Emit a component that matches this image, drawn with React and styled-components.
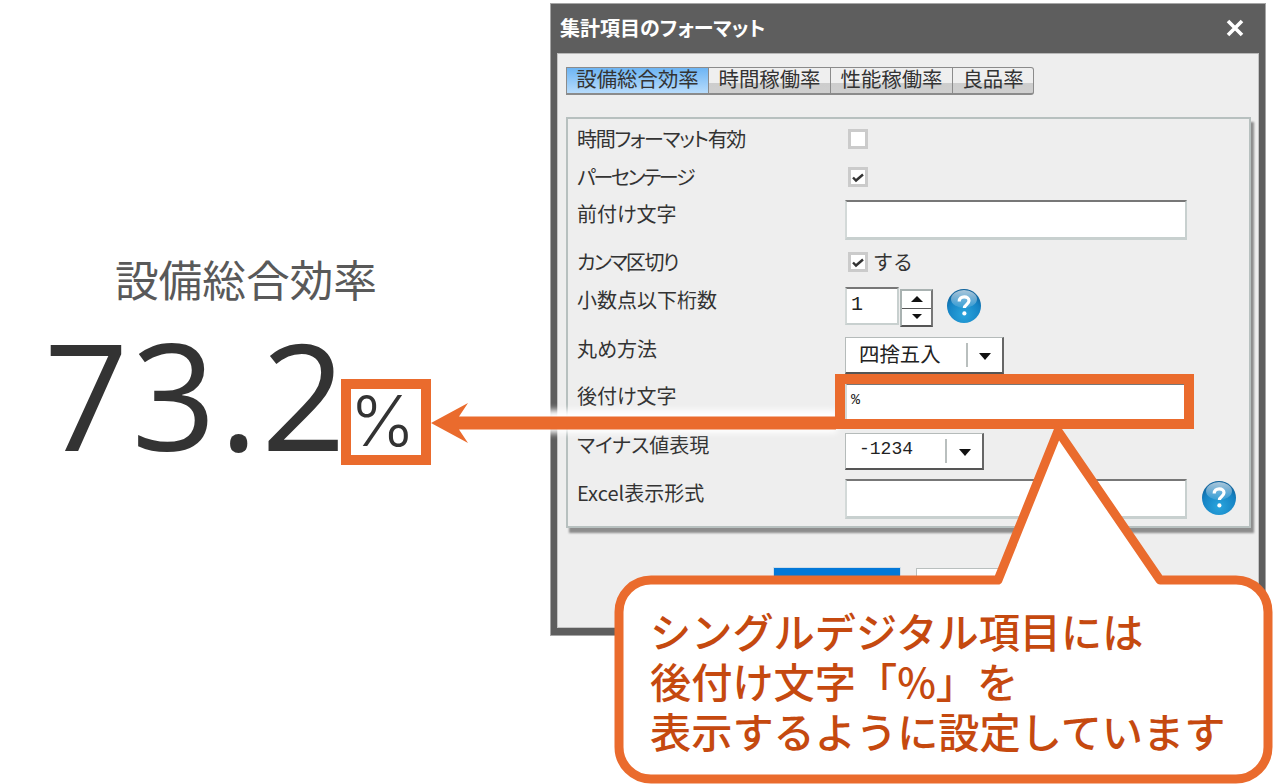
import React from "react";
import styled, { createGlobalStyle } from "styled-components";

const GlobalStyle = createGlobalStyle`
  html, body {
    margin: 0;
    padding: 0;
    background: #fff;
  }
`;

const JP = `"Noto Sans CJK JP", "Noto Sans", sans-serif`;

const HelpIcon = ({ id }) => (
  <svg width="36" height="36" viewBox="0 0 36 36">
    <defs>
      <radialGradient id={id} cx="50%" cy="75%" r="70%">
        <stop offset="0%" stopColor="#2aa5dd" />
        <stop offset="70%" stopColor="#1583c4" />
        <stop offset="100%" stopColor="#0f639c" />
      </radialGradient>
      <linearGradient id={`${id}-top`} x1="0" y1="0" x2="0" y2="1">
        <stop offset="0%" stopColor="#fff" stopOpacity="0.65" />
        <stop offset="100%" stopColor="#fff" stopOpacity="0.1" />
      </linearGradient>
    </defs>
    <circle cx="18" cy="18" r="17" fill={`url(#${id})`} />
    <ellipse cx="18" cy="11" rx="13" ry="9" fill={`url(#${id}-top)`} />
    <path
      d="M13.2 13.4c0-3 2.2-4.6 5-4.6s4.8 1.6 4.8 4c0 3.6-4.6 3.6-4.6 7.2"
      fill="none"
      stroke="#fff"
      strokeWidth="3.2"
    />
    <circle cx="18.4" cy="25.4" r="2.1" fill="#fff" />
  </svg>
);

const Check = () => (
  <svg width="14" height="14" viewBox="0 0 14 14">
    <path d="M2 7.5l3 3 7-6" fill="none" stroke="#333" strokeWidth="2.4" />
  </svg>
);

const App = () => {
  const rows = {
    timeFormat: "時間フォーマット有効",
    percent: "パーセンテージ",
    prefix: "前付け文字",
    comma: "カンマ区切り",
    decimals: "小数点以下桁数",
    rounding: "丸め方法",
    suffix: "後付け文字",
    minus: "マイナス値表現",
    excel: "Excel表示形式",
  };

  return (
    <Page>
      <GlobalStyle />
      <Summary>
        <SummaryTitle>設備総合効率</SummaryTitle>
        <SummaryValue>
          73.2<Unit>%</Unit>
        </SummaryValue>
      </Summary>

      <Dialog>
        <TitleBar>
          <DialogTitle>集計項目のフォーマット</DialogTitle>
          <CloseMark viewBox="0 0 18 18">
            <path d="M2 2l14 14M16 2L2 16" stroke="#fff" strokeWidth="3.6" fill="none" />
          </CloseMark>
        </TitleBar>
        <DialogBody>
          <Tabs>
            <Tab $active $width={143}>設備総合効率</Tab>
            <Tab $width={122}>時間稼働率</Tab>
            <Tab $width={122}>性能稼働率</Tab>
            <Tab $width={81} $last>良品率</Tab>
          </Tabs>

          <Panel>
            <Row $height={38}>
              <Label $spacing={-1.3}>{rows.timeFormat}</Label>
              <CheckBox $top={9} />
            </Row>
            <Row $height={37}>
              <Label $spacing={-2.3}>{rows.percent}</Label>
              <CheckBox $top={9}><Check /></CheckBox>
            </Row>
            <Row $height={48}>
              <Label>{rows.prefix}</Label>
              <TextField $top={5} />
            </Row>
            <Row $height={38}>
              <Label $spacing={-1.7}>{rows.comma}</Label>
              <CheckBox $top={9}><Check /></CheckBox>
              <CheckText>する</CheckText>
            </Row>
            <Row $height={49}>
              <Label>{rows.decimals}</Label>
              <SpinField>1</SpinField>
              <SpinButtons>
                <SpinUp />
                <SpinDown />
              </SpinButtons>
              <HelpSlot $left={13}><HelpIcon id="help-a" /></HelpSlot>
            </Row>
            <Row $height={47}>
              <Label>{rows.rounding}</Label>
              <SelectBox $width={159}>
                <SelectText $width={122}>四捨五入</SelectText>
                <SelectArrow />
              </SelectBox>
            </Row>
            <Row $height={49}>
              <Label>{rows.suffix}</Label>
              <TextField $top={6}>
                <FieldValue>%</FieldValue>
              </TextField>
            </Row>
            <Row $height={48}>
              <Label>{rows.minus}</Label>
              <SelectBox $width={139}>
                <SelectText $width={101} $mono>-1234</SelectText>
                <SelectArrow />
              </SelectBox>
            </Row>
            <Row $height={50}>
              <Label>{rows.excel}</Label>
              <TextField $top={5} />
              <HelpSlot $left={14} $top={6}><HelpIcon id="help-b" /></HelpSlot>
            </Row>
          </Panel>

          <Buttons>
            <PrimaryButton />
            <SecondaryButton />
          </Buttons>
        </DialogBody>
      </Dialog>

      {/* annotations drawn over the screenshot */}
      <ArrowGlow />
      <ArrowMark viewBox="0 0 405 40">
        <path d="M0 20L37 0l-9 13.500H405v13H28l9 13.500z" fill="#ea6b2d" />
      </ArrowMark>
      <HighlightUnit />
      <HighlightField />
      <Callout>
        <CalloutShape viewBox="0 0 659 359">
          <path
            d="M37 155H384L444 6 546 155H622a32 32 0 0 1 32 32V322a32 32 0 0 1-32 32H37a32 32 0 0 1-32-32V187a32 32 0 0 1 32-32z"
            fill="#fff"
            stroke="#ea6b2d"
            strokeWidth="9"
            strokeLinejoin="round"
          />
        </CalloutShape>
        <CalloutText>
          シングルデジタル項目には
          <br />
          後付け文字「%」を
          <br />
          表示するように設定しています
        </CalloutText>
      </Callout>
    </Page>
  );
};

export default App;

const Page = styled.div`
  position: relative;
  display: flex;
  align-items: flex-start;
  width: 1273px;
  height: 784px;
  overflow: hidden;
  background: #fff;
  font-family: ${JP};
`;

const Summary = styled.div`
  display: flex;
  flex-direction: column;
  width: 550px;
  flex: none;
  padding-top: 247px;
  box-sizing: border-box;
`;

const SummaryTitle = styled.div`
  width: 492px;
  font-size: 43.7px;
  line-height: 62px;
  text-align: center;
  color: #595959;
`;

const SummaryValue = styled.div`
  display: flex;
  align-items: baseline;
  margin: 20px 0 0 44px;
  font-family: "Open Sans", sans-serif;
  font-size: 148px;
  letter-spacing: 3px;
  line-height: 130px;
  color: #333;
`;

const Unit = styled.span`
  margin-left: 1px;
  font-family: Inter, "Open Sans", sans-serif;
  font-size: 70px;
  font-weight: 300;
  letter-spacing: 0;
  color: #333;
  position: relative;
  top: -5px;
`;

const Dialog = styled.div`
  width: 716px;
  height: 633px;
  margin-top: 3px;
  flex: none;
  display: flex;
  flex-direction: column;
  box-sizing: border-box;
  background: #5e5e5e;
  border: 1px solid #a6a6a6;
`;

const TitleBar = styled.div`
  height: 49px;
  flex: none;
  display: flex;
  align-items: center;
  justify-content: space-between;
  padding: 0 21px 2px 9px;
  box-sizing: border-box;
`;

const DialogTitle = styled.div`
  font-size: 20px;
  font-weight: 700;
  color: #fff;
  font-feature-settings: "palt";
`;

const CloseMark = styled.svg`
  width: 18px;
  height: 18px;
`;

const DialogBody = styled.div`
  flex: 1;
  margin: 0 6px 7px 6px;
  padding: 13px 8px 0 8px;
  background: #eeeeee;
  border-top: 1px solid #b8b8b8;
  border-left: 1px solid #c4c4c4;
  border-right: 1px solid #c4c4c4;
  border-bottom: 1px solid #c4c4c4;
  display: flex;
  flex-direction: column;
  min-height: 0;
`;

const Tabs = styled.div`
  display: flex;
  height: 28px;
  flex: none;
`;

const Tab = styled.div`
  width: ${(p) => p.$width}px;
  box-sizing: border-box;
  font-size: 20.4px;
  line-height: 21px;
  text-align: center;
  white-space: nowrap;
  color: #333;
  border: 1px solid #8b8b8b;
  border-left-width: ${(p) => (p.$active ? 1 : 0)}px;
  border-bottom-width: 2px;
  border-radius: ${(p) => (p.$last ? "0 3px 3px 0" : "0")};
  background: ${(p) =>
    p.$active
      ? "linear-gradient(#6db5f4, #b7dbfb)"
      : "linear-gradient(#efefef 0%, #efefef 60%, #cdcdcd 62%, #cfcfcf 100%)"};
`;

const Panel = styled.div`
  margin-top: 22px;
  width: 685px;
  height: 411px;
  flex: none;
  box-sizing: border-box;
  padding: 1px 0 0 9px;
  background: #eeeeee;
  border: 2px solid #b7c0bf;
  box-shadow: 3px 5px 2px #8d8d8d;
`;

const Row = styled.div`
  display: flex;
  align-items: flex-start;
  height: ${(p) => p.$height}px;
`;

const Label = styled.div`
  width: 268px;
  flex: none;
  font-size: 20px;
  line-height: 38px;
  letter-spacing: ${(p) => p.$spacing || 0}px;
  color: #333;
  white-space: nowrap;
  font-feature-settings: "palt";
`;

const CheckBox = styled.div`
  width: 20px;
  height: 20px;
  margin: ${(p) => p.$top}px 0 0 3px;
  box-sizing: border-box;
  border: 3px solid #cbcbcb;
  background: #fff;
  display: flex;
  align-items: center;
  justify-content: center;
`;

const CheckText = styled.span`
  margin-left: 5px;
  font-size: 20px;
  line-height: 38px;
  color: #333;
`;

const TextField = styled.div`
  width: 342px;
  height: 40px;
  margin-top: ${(p) => p.$top}px;
  box-sizing: border-box;
  background: #fff;
  border-top: 2px solid #777;
  border-left: 2px solid #d3d9d8;
  border-right: 2px solid #c8d0cf;
  border-bottom: 3px solid #c8d0cf;
  padding-left: 4px;
`;

const FieldValue = styled.span`
  font-family: "Liberation Mono", monospace;
  font-size: 15px;
  line-height: 30px;
  color: #222;
`;

const SpinField = styled.div`
  width: 54px;
  height: 38px;
  margin-top: 6px;
  box-sizing: border-box;
  padding-left: 4px;
  background: #fff;
  border-top: 2px solid #777;
  border-left: 2px solid #d3d9d8;
  border-right: 2px solid #c8d0cf;
  border-bottom: 2px solid #c8d0cf;
  font-family: "Liberation Mono", monospace;
  font-size: 20px;
  line-height: 32px;
  color: #222;
`;

const SpinButtons = styled.div`
  width: 33px;
  height: 38px;
  margin: 8px 0 0 1px;
  box-sizing: border-box;
  display: flex;
  flex-direction: column;
  background: #fff;
  border: 2px solid #a9b2b1;
  border-bottom-color: #555;
  border-right-color: #777;
`;

const SpinUp = styled.div`
  flex: 1;
  border-bottom: 1px solid #555;
  display: flex;
  align-items: center;
  justify-content: center;

  &::before {
    content: "";
    border-left: 6px solid transparent;
    border-right: 6px solid transparent;
    border-bottom: 6px solid #111;
  }
`;

const SpinDown = styled.div`
  flex: 1;
  display: flex;
  align-items: center;
  justify-content: center;

  &::before {
    content: "";
    border-left: 5px solid transparent;
    border-right: 5px solid transparent;
    border-top: 5px solid #111;
  }
`;

const HelpSlot = styled.div`
  width: 36px;
  height: 36px;
  margin: ${(p) => p.$top || 7}px 0 0 ${(p) => p.$left}px;
`;

const SelectBox = styled.div`
  width: ${(p) => p.$width}px;
  height: 37px;
  margin-top: 7px;
  box-sizing: border-box;
  display: flex;
  align-items: center;
  background: #fff;
  border: 1px solid #b5bbba;
  border-right: 2px solid #666;
  border-bottom: 2px solid #555;
`;

const SelectText = styled.div`
  width: ${(p) => p.$width}px;
  flex: none;
  box-sizing: border-box;
  height: 24px;
  padding-left: 13px;
  border-right: 2px solid #b9bfbe;
  font-family: ${(p) => (p.$mono ? `"Liberation Mono", monospace` : JP)};
  font-size: ${(p) => (p.$mono ? 18 : 20.4)}px;
  line-height: 20px;
  color: #222;
`;

const SelectArrow = styled.div`
  margin: 2px auto 0;
  border-left: 6px solid transparent;
  border-right: 6px solid transparent;
  border-top: 7px solid #111;
`;

const Buttons = styled.div`
  display: flex;
  gap: 16px;
  margin: 40px 0 0 208px;
`;

const PrimaryButton = styled.div`
  width: 126px;
  height: 40px;
  background: #0378d8;
  outline: 1px solid #cfdde8;
`;

const SecondaryButton = styled.div`
  width: 120px;
  height: 40px;
  box-sizing: border-box;
  background: #fff;
  border: 1px solid #b9bfbe;
`;

const ArrowGlow = styled.div`
  position: absolute;
  left: 545px;
  top: 410px;
  width: 292px;
  height: 23px;
  background: #fff;
  filter: blur(3px);
`;

const ArrowMark = styled.svg`
  position: absolute;
  left: 431px;
  top: 403px;
  width: 405px;
  height: 40px;
`;

const HighlightUnit = styled.div`
  position: absolute;
  left: 341px;
  top: 379px;
  width: 90px;
  height: 86px;
  box-sizing: border-box;
  border: 10px solid #ea6b2d;
`;

const HighlightField = styled.div`
  position: absolute;
  left: 835px;
  top: 374px;
  width: 359px;
  height: 55px;
  box-sizing: border-box;
  border: 10px solid #ea6b2d;
`;

const Callout = styled.div`
  position: absolute;
  left: 614px;
  top: 425px;
  width: 659px;
  height: 359px;
`;

const CalloutShape = styled.svg`
  position: absolute;
  left: 0;
  top: 0;
  width: 659px;
  height: 359px;
`;

const CalloutText = styled.div`
  position: absolute;
  left: 36px;
  top: 180px;
  font-size: 41.2px;
  font-weight: 500;
  line-height: 50px;
  color: #c5490f;
  white-space: nowrap;
`;
